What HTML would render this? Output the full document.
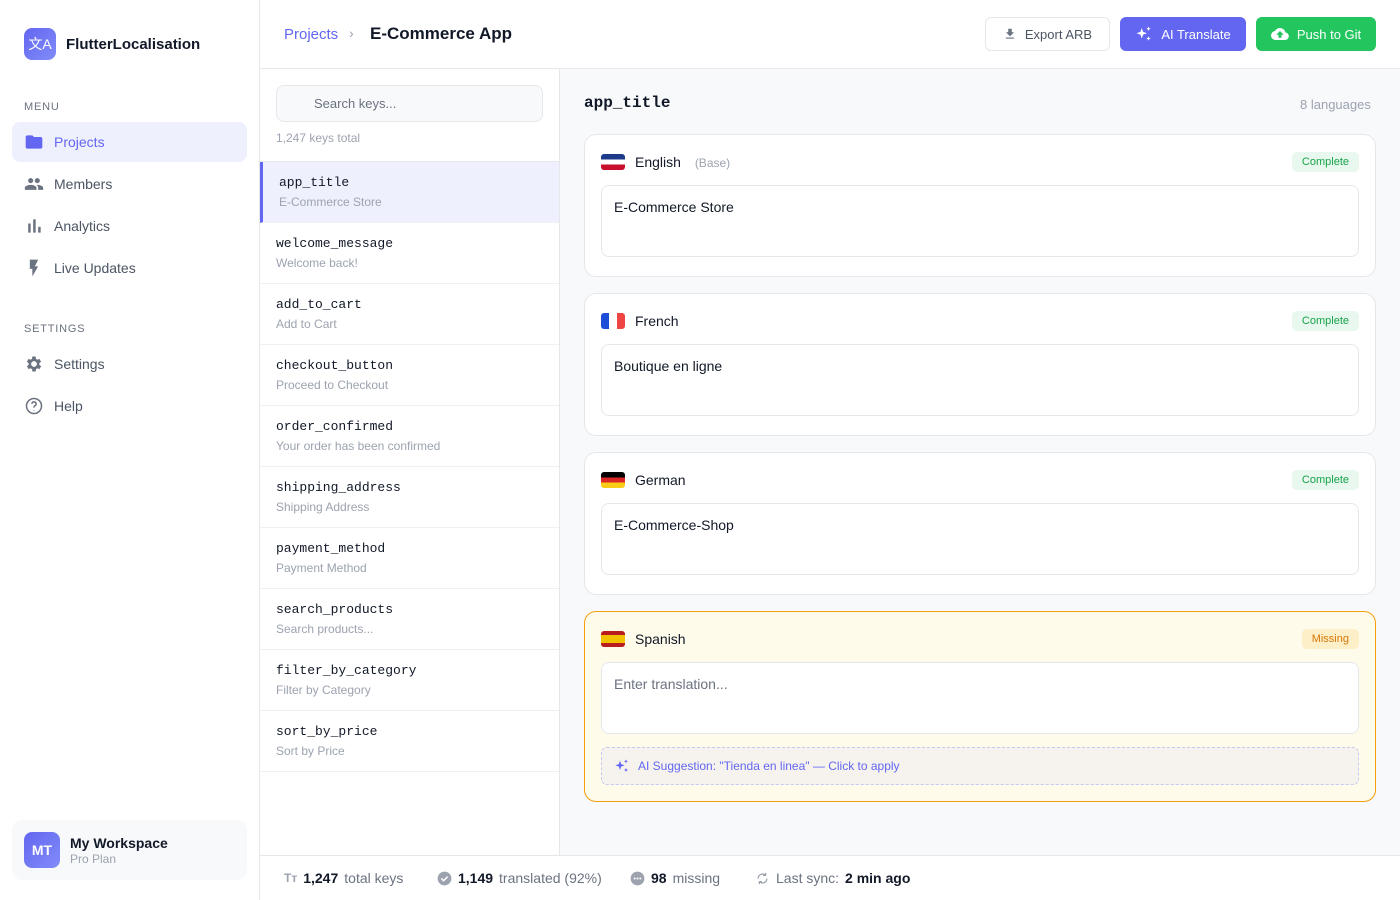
<!DOCTYPE html>
<html><head><meta charset="utf-8"><style>
*{box-sizing:border-box;margin:0;padding:0}
body{width:1400px;height:900px;overflow:hidden;font-family:"Liberation Sans",sans-serif;background:#fff;position:relative;color:#111827}
.abs{position:absolute}
.side{left:0;top:0;width:260px;height:900px;border-right:1px solid #e5e7eb;background:#fff}
.logo{left:24px;top:28px;width:32px;height:32px;border-radius:8px;background:linear-gradient(135deg,#6366f1,#818cf8);color:#fff;font-size:14px;display:flex;align-items:center;justify-content:center}
.lbl{font-size:11px;color:#6b7280;letter-spacing:.8px;left:24px}
.nav{left:12px;width:235px;height:40px;border-radius:8px;display:flex;align-items:center;padding-left:12px;font-size:14px;color:#4b5563}
.nav svg{width:20px;height:20px;margin-right:10px;fill:#6b7280}
.nav.act{background:#eef0fd;color:#6366f1}
.nav.act svg{fill:#6366f1}
.hdr{left:260px;top:0;width:1140px;height:69px;border-bottom:1px solid #e5e7eb;background:#fff}
.btn{top:17px;height:34px;border-radius:6px;font-size:13px;display:flex;align-items:center;justify-content:center;gap:8px}
.list{left:260px;top:69px;width:300px;height:786px;border-right:1px solid #e5e7eb;background:#fff}
.item{position:absolute;left:0;width:299px;height:61px;border-bottom:1px solid #eef0f3;padding:13px 0 0 16px}
.item .k{font-family:"Liberation Mono",monospace;font-size:13px;color:#111827}
.item .v{font-size:12px;color:#9ca3af;margin-top:5px}
.main{left:560px;top:69px;width:840px;height:786px;background:#f8f9fb}
.card{left:584px;width:792px;border:1px solid #e5e7eb;border-radius:12px;background:#fff}
.flag{position:absolute;left:16px;top:19px;width:24px;height:16px;border-radius:3px;overflow:hidden}
.lang{position:absolute;left:50px;top:19px;font-size:14px;color:#111827}
.badge{position:absolute;right:16px;top:17px;height:20px;padding:0 10px;border-radius:5px;font-size:11px;line-height:20px;background:#e8f8ee;color:#16a34a}
.ta{position:absolute;left:16px;right:16px;top:50px;height:72px;border:1px solid #e5e7eb;border-radius:8px;background:#fff;padding:13px 12px;font-size:14px;color:#111827}
.foot{left:260px;top:855px;width:1140px;height:45px;border-top:1px solid #e5e7eb;background:#fff;font-size:14px;color:#6b7280}
.foot b{color:#111827}
.fi{position:absolute;top:14px;display:flex;align-items:center;gap:6px}
</style></head><body>
<div class="abs side">
 <div class="abs logo">文A</div>
 <div class="abs" style="left:66px;top:36px;font-size:15px;font-weight:bold">FlutterLocalisation</div>
 <div class="abs lbl" style="top:101px">MENU</div>
 <div class="abs nav act" style="top:122px"><svg viewBox="0 0 24 24"><path d="M10 4H4c-1.1 0-2 .9-2 2v12c0 1.1.9 2 2 2h16c1.1 0 2-.9 2-2V8c0-1.1-.9-2-2-2h-8l-2-2z"/></svg>Projects</div>
 <div class="abs nav" style="top:164px"><svg viewBox="0 0 24 24"><path d="M16 11c1.66 0 3-1.34 3-3s-1.34-3-3-3-3 1.34-3 3 1.34 3 3 3zm-8 0c1.66 0 3-1.34 3-3S9.66 5 8 5 5 6.34 5 8s1.34 3 3 3zm0 2c-2.33 0-7 1.17-7 3.5V19h14v-2.5C15 14.17 10.33 13 8 13zm8 0c-.29 0-.62.02-.97.05 1.16.84 1.97 1.97 1.97 3.45V19h6v-2.5c0-2.33-4.67-3.5-7-3.5z"/></svg>Members</div>
 <div class="abs nav" style="top:206px"><svg viewBox="0 0 24 24"><path d="M5 9h3v11H5zm6-5h3v16h-3zm6 9h3v7h-3z"/></svg>Analytics</div>
 <div class="abs nav" style="top:248px"><svg viewBox="0 0 24 24"><path d="M7 2v11h3v9l7-12h-4l4-8z"/></svg>Live Updates</div>
 <div class="abs lbl" style="top:323px">SETTINGS</div>
 <div class="abs nav" style="top:344px"><svg viewBox="0 0 24 24"><path d="M19.4 13a7.5 7.5 0 0 0 0-2l2.1-1.6-2-3.5-2.5 1a7 7 0 0 0-1.7-1L15 3h-4l-.4 2.9a7 7 0 0 0-1.7 1l-2.5-1-2 3.5L6.6 11a7.5 7.5 0 0 0 0 2l-2.1 1.6 2 3.5 2.5-1a7 7 0 0 0 1.7 1L11 21h4l.4-2.9a7 7 0 0 0 1.7-1l2.5 1 2-3.5zM13 15.5a3.5 3.5 0 1 1 0-7 3.5 3.5 0 0 1 0 7z" transform="translate(-1 0)"/></svg>Settings</div>
 <div class="abs nav" style="top:386px"><svg viewBox="0 0 24 24" style="fill:none;stroke:#6b7280;stroke-width:1.8"><circle cx="12" cy="12" r="9"/><path d="M9.5 9.5a2.5 2.5 0 1 1 3.5 2.3c-.7.3-1 .8-1 1.5V14M12 17v.5"/></svg>Help</div>
 <div class="abs" style="left:12px;top:820px;width:235px;height:60px;border-radius:10px;background:#f8f9fb">
  <div class="abs" style="left:12px;top:12px;width:36px;height:36px;border-radius:8px;background:linear-gradient(135deg,#6366f1,#818cf8);color:#fff;font-size:14px;font-weight:bold;display:flex;align-items:center;justify-content:center">MT</div>
  <div class="abs" style="left:58px;top:15px;font-size:14px;font-weight:bold">My Workspace</div>
  <div class="abs" style="left:58px;top:32px;font-size:12px;color:#9ca3af">Pro Plan</div>
 </div>
</div>
<div class="abs hdr">
 <div class="abs" style="left:24px;top:26px;font-size:15px;color:#6366f1">Projects</div>
 <div class="abs" style="left:89px;top:25px;font-size:14px;color:#9ca3af">›</div>
 <div class="abs" style="left:110px;top:24px;font-size:17px;font-weight:bold">E-Commerce App</div>
 <div class="abs btn" style="left:725px;width:125px;border:1px solid #e5e7eb;color:#4b5563"><svg width="14" height="14" viewBox="0 0 24 24" fill="#6b7280"><path d="M19 9h-4V3H9v6H5l7 7 7-7zM5 18v2h14v-2z"/></svg>Export ARB</div>
 <div class="abs btn" style="left:860px;width:126px;background:#6366f1;color:#fff"><svg width="18" height="18" viewBox="0 0 24 24" fill="#fff"><path d="M9 4l1.8 5.2L16 11l-5.2 1.8L9 18l-1.8-5.2L2 11l5.2-1.8zM18 2l.9 2.1L21 5l-2.1.9L18 8l-.9-2.1L15 5l2.1-.9zM18 15l.9 2.1L21 18l-2.1.9L18 21l-.9-2.1L15 18l2.1-.9z"/></svg>AI Translate</div>
 <div class="abs btn" style="left:996px;width:120px;background:#22c55e;color:#fff"><svg width="18" height="18" viewBox="0 0 24 24" fill="#fff"><path d="M19.35 10.04A7.49 7.49 0 0 0 12 4C9.11 4 6.6 5.64 5.35 8.04A6 6 0 0 0 6 20h13a5 5 0 0 0 .35-9.96zM14 13v4h-4v-4H7l5-5 5 5h-3z"/></svg>Push to Git</div>
</div>
<div class="abs list">
 <div class="abs" style="left:16px;top:16px;width:267px;height:37px;border:1px solid #e5e7eb;border-radius:8px;background:#f8f9fb;font-size:13px;color:#6b7280;padding:10px 0 0 37px">Search keys...</div>
 <div class="abs" style="left:16px;top:62px;font-size:12px;color:#9ca3af">1,247 keys total</div>
 <div class="abs" style="left:0;top:92px;width:299px;border-top:1px solid #e5e7eb"></div>
 <div class="item" style="top:93px;background:#eef0fd;border-left:3px solid #6366f1;padding-left:16px"><div class="k">app_title</div><div class="v">E-Commerce Store</div></div>
 <div class="item" style="top:154px"><div class="k">welcome_message</div><div class="v">Welcome back!</div></div>
 <div class="item" style="top:215px"><div class="k">add_to_cart</div><div class="v">Add to Cart</div></div>
 <div class="item" style="top:276px"><div class="k">checkout_button</div><div class="v">Proceed to Checkout</div></div>
 <div class="item" style="top:337px"><div class="k">order_confirmed</div><div class="v">Your order has been confirmed</div></div>
 <div class="item" style="top:398px"><div class="k">shipping_address</div><div class="v">Shipping Address</div></div>
 <div class="item" style="top:459px"><div class="k">payment_method</div><div class="v">Payment Method</div></div>
 <div class="item" style="top:520px"><div class="k">search_products</div><div class="v">Search products...</div></div>
 <div class="item" style="top:581px"><div class="k">filter_by_category</div><div class="v">Filter by Category</div></div>
 <div class="item" style="top:642px"><div class="k">sort_by_price</div><div class="v">Sort by Price</div></div>
</div>
<div class="abs main"></div>
<div class="abs" style="left:584px;top:94px;font-family:'Liberation Mono',monospace;font-size:16px;font-weight:bold">app_title</div>
<div class="abs" style="left:1300px;top:97px;font-size:13px;color:#9ca3af">8 languages</div>

<div class="abs card" style="top:134px;height:143px">
 <div class="flag" style="background:linear-gradient(#1e3a8a 0 33%,#fff 33% 66%,#c8102e 66%)"></div>
 <div class="lang">English <span style="font-size:12px;color:#9ca3af;margin-left:10px">(Base)</span></div>
 <div class="badge">Complete</div>
 <div class="ta">E-Commerce Store</div>
</div>
<div class="abs card" style="top:293px;height:143px">
 <div class="flag" style="background:linear-gradient(90deg,#1d4ed8 0 33%,#fff 33% 66%,#ef4444 66%)"></div>
 <div class="lang">French</div>
 <div class="badge">Complete</div>
 <div class="ta">Boutique en ligne</div>
</div>
<div class="abs card" style="top:452px;height:143px">
 <div class="flag" style="background:linear-gradient(#000 0 33%,#dc2626 33% 66%,#facc15 66%)"></div>
 <div class="lang">German</div>
 <div class="badge">Complete</div>
 <div class="ta">E-Commerce-Shop</div>
</div>
<div class="abs card" style="top:611px;height:191px;background:#fefbeb;border-color:#f59e0b">
 <div class="flag" style="background:linear-gradient(#b91c1c 0 25%,#f2c200 25% 75%,#b91c1c 75%)"></div>
 <div class="lang">Spanish</div>
 <div class="badge" style="background:#fdefc8;color:#d97706">Missing</div>
 <div class="ta" style="color:#6b7280">Enter translation...</div>
 <div style="position:absolute;left:16px;right:16px;top:135px;height:38px;border:1px dashed #c7c9f5;border-radius:6px;background:#f6f3ee;font-size:12px;color:#6366f1;display:flex;align-items:center;padding-left:12px;gap:8px"><svg width="16" height="16" viewBox="0 0 24 24" fill="#6366f1"><path d="M9 4l1.8 5.2L16 11l-5.2 1.8L9 18l-1.8-5.2L2 11l5.2-1.8zM18 2l.9 2.1L21 5l-2.1.9L18 8l-.9-2.1L15 5l2.1-.9zM18 15l.9 2.1L21 18l-2.1.9L18 21l-.9-2.1L15 18l2.1-.9z"/></svg>AI Suggestion: "Tienda en linea" — Click to apply</div>
</div>

<div class="abs foot">
 <div class="fi" style="left:24px"><span style="font-size:12px;color:#9ca3af;font-weight:bold">Tт</span><b>1,247</b> total keys</div>
 <div class="fi" style="left:177px"><svg width="15" height="15" viewBox="0 0 24 24"><circle cx="12" cy="12" r="11" fill="#9ca3af"/><path d="M7 12l3.5 3.5L17 9" stroke="#fff" stroke-width="2.5" fill="none"/></svg><b>1,149</b> translated (92%)</div>
 <div class="fi" style="left:370px"><svg width="15" height="15" viewBox="0 0 24 24"><circle cx="12" cy="12" r="11" fill="#9ca3af"/><circle cx="7.5" cy="12" r="1.6" fill="#fff"/><circle cx="12" cy="12" r="1.6" fill="#fff"/><circle cx="16.5" cy="12" r="1.6" fill="#fff"/></svg><b>98</b> missing</div>
 <div class="fi" style="left:495px"><svg width="15" height="15" viewBox="0 0 24 24" fill="none" stroke="#9ca3af" stroke-width="2"><path d="M5 12a7 7 0 0 1 12-5M19 12a7 7 0 0 1-12 5M17 3v4h-4M7 21v-4h4"/></svg>Last sync: <b>2 min ago</b></div>
</div>
</body></html>
